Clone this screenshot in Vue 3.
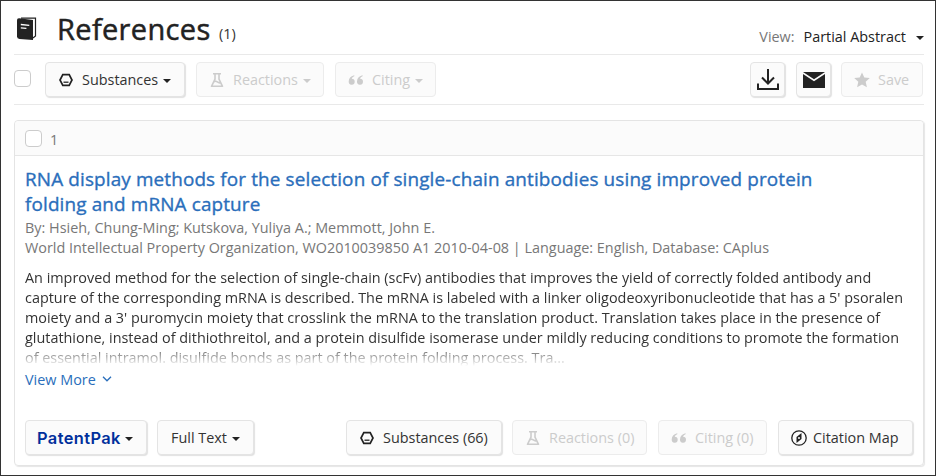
<template>
  <main class="page">
    <header class="page-header">
      <svg class="book-icon" viewBox="0 0 20 24">
        <path d="M4 1.2 18.5 1v18L16 21" fill="#fff" stroke="#222" stroke-width="1.2" />
        <path d="M0 3.2Q0 1 2.2 1.2L16 3v20L2.5 22Q0 21.7 0 19.5Z" fill="#222" />
        <path d="m3.8 7.5 8.5.8M3.8 10.8l5.6.5" fill="none" stroke="#fff" stroke-width="1.3" />
      </svg>
      <h1>References</h1>
      <span class="count">(1)</span>
      <div class="view">
        <span class="view-label">View:</span>
        <span class="view-value">Partial Abstract</span>
        <i class="caret" />
      </div>
    </header>

    <div class="toolbar">
      <span class="checkbox" />
      <button v-for="b in filters" :key="b.label" class="btn" :class="b.cls" :disabled="b.disabled">
        <svg class="icon" viewBox="0 0 16 16" v-html="icons[b.icon]" />
        <span class="label">{{ b.label }}</span>
        <i class="caret" />
      </button>
      <div class="actions">
        <button class="btn square" aria-label="Download">
          <svg class="download" viewBox="0 0 22 21">
            <path d="M11 0v14M5 8.5l6 6 6-6M1 14.5V20h20v-5.5" fill="none" stroke="#222" stroke-width="2" />
          </svg>
        </button>
        <button class="btn square" aria-label="Email">
          <svg class="mail" viewBox="0 0 22 16">
            <path d="M0 0h22L11 7.2ZM0 2l11 7.2L22 2v14H0Z" fill="#222" />
          </svg>
        </button>
        <button class="btn save" disabled>
          <svg class="icon" viewBox="0 0 16 16">
            <path d="m8 .5 2.3 5 5.5.6-4.1 3.7 1.2 5.4L8 12.4l-4.9 2.8 1.2-5.4L.2 6.1l5.5-.6Z" fill="currentColor" />
          </svg>
          <span class="label">Save</span>
        </button>
      </div>
    </div>

    <article class="card">
      <div class="card-head">
        <span class="checkbox" />
        <span class="index">1</span>
      </div>
      <div class="card-body">
        <h2>RNA display methods for the selection of single-chain antibodies using improved protein<br>folding and mRNA capture</h2>
        <p class="meta authors">By: Hsieh, Chung-Ming; Kutskova, Yuliya A.; Memmott, John E.</p>
        <p class="meta source">World Intellectual Property Organization, WO2010039850 A1 2010-04-08 | Language: English, Database: CAplus</p>
        <p class="abstract">
          <span v-for="line in abstract" :key="line">{{ line }}</span>
        </p>
        <a class="more">
          <span>View More</span>
          <svg viewBox="0 0 10 6"><path d="m1 .8 4 4 4-4" fill="none" stroke="currentColor" stroke-width="1.3" /></svg>
        </a>
        <div class="card-actions">
          <button class="btn patentpak"><span class="label">PatentPak</span><i class="caret" /></button>
          <button class="btn fulltext"><span class="label">Full Text</span><i class="caret" /></button>
          <span class="spacer" />
          <button v-for="b in links" :key="b.label" class="btn" :class="b.cls" :disabled="b.disabled">
            <svg class="icon" viewBox="0 0 16 16" v-html="icons[b.icon]" />
            <span class="label">{{ b.label }}</span>
          </button>
        </div>
      </div>
    </article>
  </main>
</template>

<script setup>
const icons = {
  hexagon: '<path d="M4.8 2.6h6.4L14 8l-2.8 5.4H4.8L2 8Z" fill="none" stroke="currentColor" stroke-width="1.7"/><path d="M5.5 10.2h5" stroke="currentColor" stroke-width="1.3"/>',
  flask: '<path d="M4 1.8h8M6 2v5.2L2.5 14.3h11L10 7.2V2M4.5 10.2q2-1.8 3.8-.3t3.8.6" fill="none" stroke="currentColor" stroke-width="1.6" stroke-linejoin="round"/>',
  quote: '<path d="M6.1 3.2Q.8 4.6.7 9.5a3 3 0 1 0 3-2.8Q4 5 6.5 4ZM14.4 3.2Q9.1 4.6 9 9.5a3 3 0 1 0 3-2.8q.3-1.7 2.8-2.7Z" fill="currentColor"/>',
  compass: '<circle cx="8" cy="8" r="7.2" fill="none" stroke="currentColor" stroke-width="1.3"/><path fill-rule="evenodd" d="M10.5 3v6L5.5 13V7ZM8 7.1a1 1 0 1 0 0 2 1 1 0 0 0 0-2Z" fill="currentColor"/>'
}

const filters = [
  { label: 'Substances', icon: 'hexagon', cls: 'f-substances' },
  { label: 'Reactions', icon: 'flask', cls: 'f-reactions', disabled: true },
  { label: 'Citing', icon: 'quote', cls: 'f-citing', disabled: true }
]

const links = [
  { label: 'Substances (66)', icon: 'hexagon', cls: 'l-substances' },
  { label: 'Reactions (0)', icon: 'flask', cls: 'l-reactions', disabled: true },
  { label: 'Citing (0)', icon: 'quote', cls: 'l-citing', disabled: true },
  { label: 'Citation Map', icon: 'compass', cls: 'l-map' }
]

const abstract = [
  'An improved method for the selection of single-chain (scFv) antibodies that improves the yield of correctly folded antibody and',
  "capture of the corresponding mRNA is described. The mRNA is labeled with a linker oligodeoxyribonucleotide that has a 5' psoralen",
  "moiety and a 3' puromycin moiety that crosslink the mRNA to the translation product. Translation takes place in the presence of",
  'glutathione, instead of dithiothreitol, and a protein disulfide isomerase under mildly reducing conditions to promote the formation',
  'of essential intramol. disulfide bonds as part of the protein folding process. Tra...'
]
</script>

<style>
body {
  margin: 0;
  background: #fff;
}
</style>

<style scoped>
* {
  box-sizing: border-box;
}

.page {
  width: 936px;
  height: 476px;
  padding: 0 11px 0 13px;
  border: 1px solid #333;
  overflow: hidden;
  font-family: "Open Sans", "Noto Sans", sans-serif;
  font-size: 14.4px;
  color: #333;
}

.page-header {
  display: flex;
  align-items: center;
  height: 54px;
  border-bottom: 1px solid #e9e9e9;
}

.book-icon {
  width: 20px;
  height: 24px;
  margin: 2px 0 0 3px;
}

h1 {
  margin: 3px 0 0 20px;
  width: 154px;
  font-size: 29px;
  font-weight: 500;
  line-height: 40px;
  letter-spacing: 0.35px;
  color: #222;
  -webkit-text-stroke: 0.5px #222;
  white-space: nowrap;
}

.count {
  margin: 12px 0 0 8px;
}

.view {
  display: flex;
  align-items: center;
  margin: 18px 0 0 auto;
  white-space: nowrap;
}

.view-label {
  color: #777;
}

.view-value {
  margin: 0 10px 0 9px;
  color: #222;
}

.caret {
  flex: none;
  border: 4px solid transparent;
  border-top-color: currentColor;
  border-bottom: 0;
}

.view .caret {
  margin-top: 2px;
  color: #222;
}

.toolbar {
  display: flex;
  align-items: center;
  height: 50px;
  border-bottom: 1px solid #e9e9e9;
}

.checkbox {
  flex: none;
  width: 17px;
  height: 17px;
  border: 1px solid #ccc;
  border-radius: 4px;
  background: #fff;
}

.toolbar .checkbox {
  margin: -3px 14px 0 0;
}

.btn {
  display: flex;
  flex: none;
  align-items: center;
  height: 35px;
  padding: 0 0 0 12px;
  border: 1px solid #e4e4e4;
  border-radius: 4px;
  background: #fbfbfb;
  box-shadow: 1px 1px 1px rgba(0, 0, 0, 0.12);
  font: inherit;
  color: #333;
  white-space: nowrap;
}

.btn:disabled {
  border-color: #ececec;
  box-shadow: none;
  color: #ccc;
}

.icon {
  flex: none;
  width: 16px;
  height: 16px;
  color: #222;
}

.btn:disabled .icon {
  color: #ccc;
}

.btn .icon {
  margin-right: 8px;
}

.btn .caret {
  margin: 2px 0 0 5px;
  color: #222;
}

.btn:disabled .caret {
  color: #ccc;
}

.f-substances {
  width: 140px;
  margin-right: 11px;
}

.f-reactions {
  width: 128px;
  margin-right: 11px;
}

.f-citing {
  width: 101px;
}

.actions {
  display: flex;
  gap: 11px;
  margin: 0 1px 0 auto;
}

.square {
  justify-content: center;
  width: 35px;
  padding: 0;
}

.download {
  width: 22px;
  height: 21px;
}

.mail {
  width: 22px;
  height: 16px;
}

.save {
  width: 82px;
  margin-left: -1px;
}

.card {
  height: 346px;
  margin-top: 15px;
  border: 1px solid #e4e4e4;
  border-radius: 4px;
  box-shadow: 1px 1px 1px rgba(0, 0, 0, 0.1);
}

.card-head {
  display: flex;
  align-items: center;
  height: 35px;
  padding-left: 10px;
  border-bottom: 1px solid #e6e6e6;
  border-radius: 4px 4px 0 0;
  background: #fbfbfb;
  color: #777;
}

.index {
  margin: 3px 0 0 8px;
}

.card-body {
  padding: 11px 10px 0 10px;
}

h2 {
  margin: 0;
  font-size: 18.9px;
  font-weight: 500;
  line-height: 25px;
  letter-spacing: 0.14px;
  color: #2a6ebb;
  -webkit-text-stroke: 0.35px #2a6ebb;
  white-space: nowrap;
}

.meta {
  margin: 0;
  line-height: 20px;
  color: #777;
  white-space: nowrap;
}

.authors {
  margin-top: 1px;
}

.abstract {
  height: 100px;
  margin: 10px 0 0;
  line-height: 20px;
  -webkit-mask-image: linear-gradient(#000 76px, transparent 98px);
  mask-image: linear-gradient(#000 76px, transparent 98px);
}

.abstract span {
  display: block;
  white-space: nowrap;
}

.more {
  display: flex;
  align-items: center;
  gap: 6px;
  height: 20px;
  margin-top: 1px;
  color: #2a6ebb;
}

.more svg {
  width: 10px;
  height: 6px;
}

.card-actions {
  display: flex;
  margin-top: 31px;
}

.spacer {
  flex: 1;
}

.patentpak {
  width: 122px;
  margin-right: 10px;
  padding-left: 11px;
  font-family: Inter, sans-serif;
  font-size: 16.4px;
  font-weight: 600;
  letter-spacing: 0.4px;
}

.patentpak .label {
  color: #002f9c;
}

.patentpak .caret {
  margin-left: 4px;
}

.fulltext {
  width: 97px;
  padding-left: 13px;
}

.l-substances {
  width: 156px;
  margin-right: 10px;
}

.l-reactions {
  width: 135px;
  margin-right: 11px;
}

.l-citing {
  width: 109px;
  margin-right: 11px;
}

.l-map {
  width: 135px;
}

.l-map .icon {
  margin-right: 6px;
}
</style>
